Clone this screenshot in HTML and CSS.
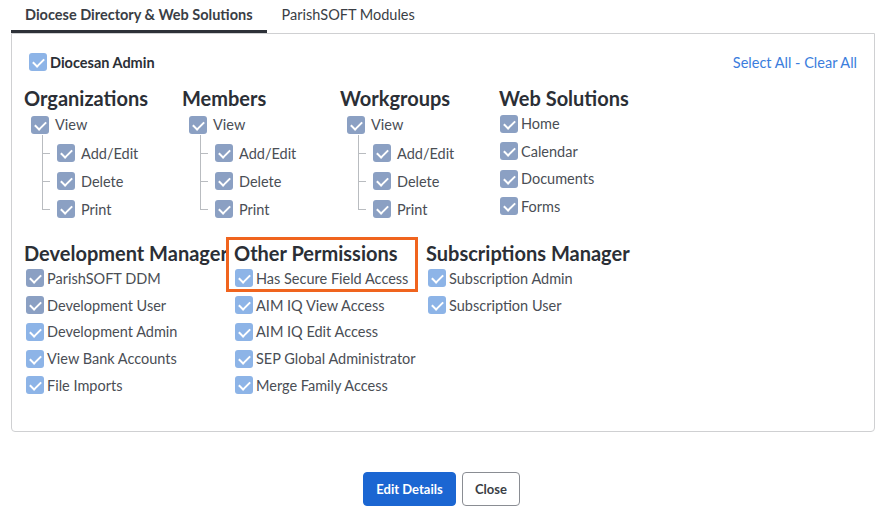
FILE: index.html
```html
<!DOCTYPE html>
<html>
<head>
<meta charset="utf-8">
<link rel="stylesheet" href="styles.css">
</head>
<body>
<div class="tabs">
  <div class="tab active">Diocese Directory &amp; Web Solutions</div>
  <div class="tab">ParishSOFT Modules</div>
</div>
<div class="panel">
  <div class="top-row">
    <label class="admin"><span class="cb light"></span>Diocesan Admin</label>
    <div class="links"><a>Select All</a> - <a>Clear All</a></div>
  </div>

  <div class="grid1">
    <div class="group">
      <h2>Organizations</h2>
      <div class="item parent"><span class="cb"></span>View</div>
      <ul class="children">
        <li><span class="cb"></span>Add/Edit</li>
        <li><span class="cb"></span>Delete</li>
        <li><span class="cb"></span>Print</li>
      </ul>
    </div>
    <div class="group">
      <h2>Members</h2>
      <div class="item parent"><span class="cb"></span>View</div>
      <ul class="children">
        <li><span class="cb"></span>Add/Edit</li>
        <li><span class="cb"></span>Delete</li>
        <li><span class="cb"></span>Print</li>
      </ul>
    </div>
    <div class="group">
      <h2>Workgroups</h2>
      <div class="item parent"><span class="cb"></span>View</div>
      <ul class="children">
        <li><span class="cb"></span>Add/Edit</li>
        <li><span class="cb"></span>Delete</li>
        <li><span class="cb"></span>Print</li>
      </ul>
    </div>
    <div class="group web">
      <h2>Web Solutions</h2>
      <div class="item"><span class="cb"></span>Home</div>
      <div class="item"><span class="cb"></span>Calendar</div>
      <div class="item"><span class="cb"></span>Documents</div>
      <div class="item"><span class="cb"></span>Forms</div>
    </div>
  </div>

  <div class="grid2">
    <div class="group flat">
      <h2>Development Manager</h2>
      <div class="item"><span class="cb"></span>ParishSOFT DDM</div>
      <div class="item"><span class="cb"></span>Development User</div>
      <div class="item"><span class="cb light"></span>Development Admin</div>
      <div class="item"><span class="cb light"></span>View Bank Accounts</div>
      <div class="item"><span class="cb light"></span>File Imports</div>
    </div>
    <div class="group flat other">
      <div class="highlight"></div>
      <h2>Other Permissions</h2>
      <div class="item"><span class="cb light"></span>Has Secure Field Access</div>
      <div class="item"><span class="cb light"></span>AIM IQ View Access</div>
      <div class="item"><span class="cb light"></span>AIM IQ Edit Access</div>
      <div class="item"><span class="cb light"></span>SEP Global Administrator</div>
      <div class="item"><span class="cb light"></span>Merge Family Access</div>
    </div>
    <div class="group flat">
      <h2>Subscriptions Manager</h2>
      <div class="item"><span class="cb light"></span>Subscription Admin</div>
      <div class="item"><span class="cb light"></span>Subscription User</div>
    </div>
  </div>
</div>
<div class="actions">
  <button class="btn primary">Edit Details</button>
  <button class="btn secondary">Close</button>
</div>
</body>
</html>
```

FILE: styles.css
```css
* { box-sizing: border-box; }
body {
  margin: 0;
  font-family: Lato, "Open Sans", sans-serif;
  color: #2b2f36;
  background: #fff;
}
.tabs {
  display: flex;
  height: 33px;
  padding-left: 11px;
}
.tab {
  padding: 0 14px 0 14px;
  font-size: 14.5px;
  line-height: 30px;
  color: #3a3e45;
}
.tab.active {
  font-weight: 700;
  border-bottom: 3px solid #2d3138;
  padding-right: 14px;
}
.tab:not(.active) { padding-left: 15px; }
.panel {
  margin: 0 14px 0 11px;
  border: 1px solid #cfd0d2;
  border-radius: 0 0 4px 4px;
  padding: 19px 17px 32px 12px;
  height: 399px;
}
.top-row {
  display: flex;
  justify-content: space-between;
  align-items: center;
  height: 18px;
}
.admin {
  display: flex;
  align-items: center;
  gap: 3px;
  font-weight: 700;
  font-size: 14.5px;
  padding-left: 5px;
}
.links { font-size: 14.5px; color: #3b7ddd; }
.links a { color: #3b7ddd; }

.cb {
  position: relative;
  display: inline-block;
  flex: none;
  width: 18px;
  height: 18px;
  border-radius: 3px;
  background: #8ba0c3;
}
.cb.light { background: #8db4e7; }
.cb::after {
  content: "";
  position: absolute;
  left: 6px;
  top: 3px;
  width: 5px;
  height: 9px;
  border: solid #fff;
  border-width: 0 2px 2px 0;
  transform: rotate(45deg);
}

h2 {
  margin: 0;
  font-size: 20px;
  line-height: 24px;
  font-weight: 700;
  color: #2b2f36;
  white-space: nowrap;
}
.grid1 {
  display: grid;
  grid-template-columns: 158px 158px 159px auto;
  margin-top: 15px;
}
.item, .children li {
  display: flex;
  align-items: center;
  font-size: 14.5px;
  color: #4a4e55;
}
.item { gap: 3px; height: 27.5px; padding-left: 1px; }
.item.parent { gap: 6px; height: 29px; padding-left: 7px; }
.children {
  list-style: none;
  margin: 0;
  padding: 0 0 0 18px;
}
.children li {
  position: relative;
  height: 28px;
  gap: 6px;
  padding-left: 15px;
}
.children li::before {
  content: "";
  position: absolute;
  left: 0;
  top: 0;
  bottom: 0;
  border-left: 1px solid #b9bcc0;
}
.children li:first-child::before { top: -4px; }
.children li:last-child::before { bottom: 50%; }
.children li::after {
  content: "";
  position: absolute;
  left: 0;
  top: 50%;
  width: 8px;
  border-top: 1px solid #b9bcc0;
}

.grid2 {
  display: grid;
  grid-template-columns: 210px 192px auto;
  margin-top: 18px;
}
.flat .item { height: 26.75px; padding-left: 2px; }
.other .item { padding-left: 1px; }
.other { position: relative; }
.highlight {
  position: absolute;
  left: -8px;
  top: -4px;
  width: 192px;
  height: 55px;
  border: 3px solid #f0641e;
}

.actions {
  display: flex;
  justify-content: center;
  gap: 6px;
  margin-top: 40px;
  padding-right: 6px;
}
.btn {
  height: 34px;
  border-radius: 4px;
  font-family: Lato, "Open Sans", sans-serif;
  font-size: 13px;
  font-weight: 700;
  cursor: pointer;
}
.btn.primary {
  background: #1b66d2;
  color: #fff;
  border: 1px solid #1b66d2;
  width: 93px;
}
.btn.secondary {
  background: #fff;
  color: #3a3e45;
  border: 1px solid #8a8d93;
  width: 58px;
}
```
